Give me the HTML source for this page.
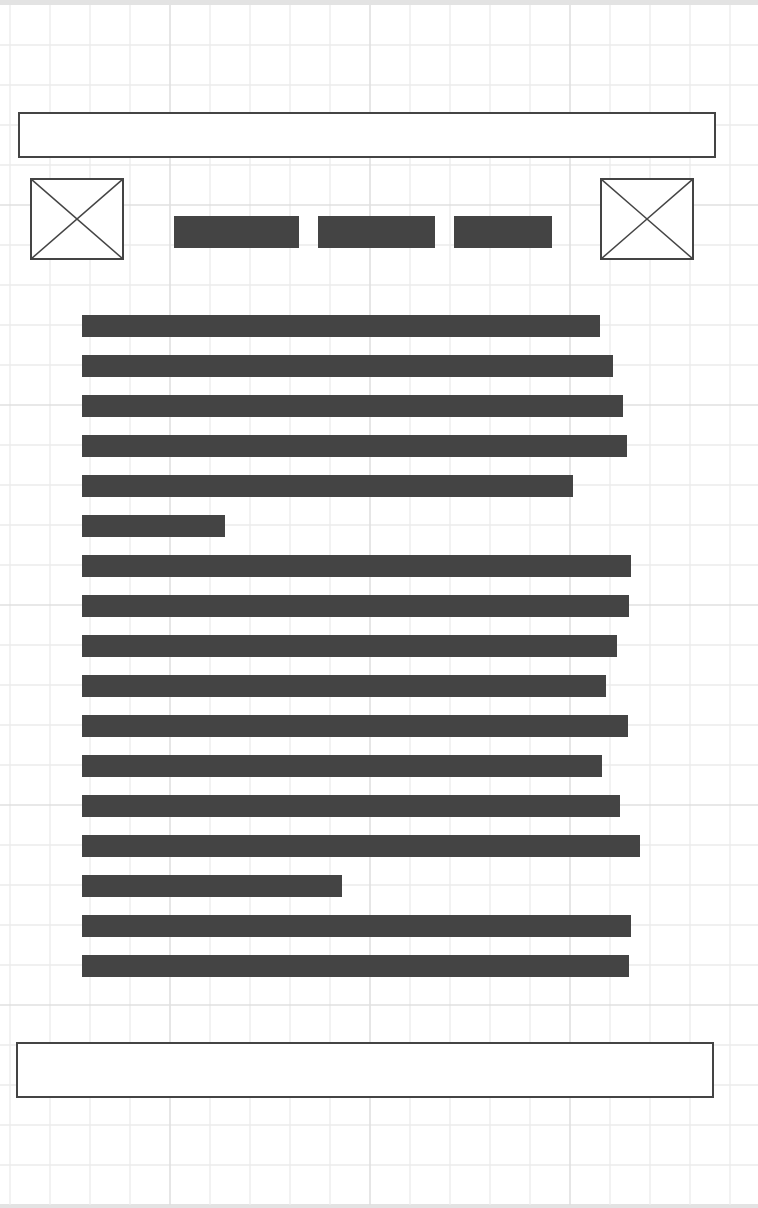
<!DOCTYPE html>
<html><head><meta charset="utf-8"><style>
html,body{margin:0;padding:0}
body{width:758px;height:1208px;position:relative;overflow:hidden;background:#fff;font-family:"Liberation Sans",sans-serif}
.grid{position:absolute;left:0;top:0;width:758px;height:1208px}
.box{position:absolute;box-sizing:border-box;border:2px solid #444;background:#fff}
.bar{position:absolute;background:#444;height:22px;left:82px}
.nav{position:absolute;background:#444;top:216px;height:32px}
</style></head><body>
<svg class="grid" width="758" height="1208" xmlns="http://www.w3.org/2000/svg">
<rect x="0" y="0" width="758" height="5" fill="#e3e3e3"/>
<rect x="0" y="1204" width="758" height="4" fill="#e3e3e3"/>
<g stroke="#ececec" stroke-width="1.4">
<path d="M10 5V1205M50 5V1205M90 5V1205M130 5V1205M210 5V1205M250 5V1205M290 5V1205M330 5V1205M410 5V1205M450 5V1205M490 5V1205M530 5V1205M610 5V1205M650 5V1205M690 5V1205M730 5V1205"/>
<path d="M0 45H758M0 85H758M0 125H758M0 165H758M0 245H758M0 285H758M0 325H758M0 365H758M0 445H758M0 485H758M0 525H758M0 565H758M0 645H758M0 685H758M0 725H758M0 765H758M0 845H758M0 885H758M0 925H758M0 965H758M0 1045H758M0 1085H758M0 1125H758M0 1165H758"/>
</g>
<g stroke="#e0e0e0" stroke-width="1.6">
<path d="M170 5V1205M370 5V1205M570 5V1205M0 205H758M0 405H758M0 605H758M0 805H758M0 1005H758"/>
</g>
</svg>
<div class="box" style="left:18px;top:112px;width:698px;height:46px"></div>
<svg style="position:absolute;left:30px;top:178px" width="94" height="82"><rect x="1" y="1" width="92" height="80" fill="#fff" stroke="#444" stroke-width="2"/><path d="M1 1L93 81M93 1L1 81" stroke="#444" stroke-width="1.5"/></svg>
<svg style="position:absolute;left:600px;top:178px" width="94" height="82"><rect x="1" y="1" width="92" height="80" fill="#fff" stroke="#444" stroke-width="2"/><path d="M1 1L93 81M93 1L1 81" stroke="#444" stroke-width="1.5"/></svg>
<div class="nav" style="left:174px;width:125px"></div>
<div class="nav" style="left:318px;width:117px"></div>
<div class="nav" style="left:454px;width:98px"></div>
<div class="bar" style="top:315px;width:518px"></div>
<div class="bar" style="top:355px;width:531px"></div>
<div class="bar" style="top:395px;width:541px"></div>
<div class="bar" style="top:435px;width:545px"></div>
<div class="bar" style="top:475px;width:491px"></div>
<div class="bar" style="top:515px;width:143px"></div>
<div class="bar" style="top:555px;width:549px"></div>
<div class="bar" style="top:595px;width:547px"></div>
<div class="bar" style="top:635px;width:535px"></div>
<div class="bar" style="top:675px;width:524px"></div>
<div class="bar" style="top:715px;width:546px"></div>
<div class="bar" style="top:755px;width:520px"></div>
<div class="bar" style="top:795px;width:538px"></div>
<div class="bar" style="top:835px;width:558px"></div>
<div class="bar" style="top:875px;width:260px"></div>
<div class="bar" style="top:915px;width:549px"></div>
<div class="bar" style="top:955px;width:547px"></div>
<div class="box" style="left:16px;top:1042px;width:698px;height:56px"></div>
</body></html>
